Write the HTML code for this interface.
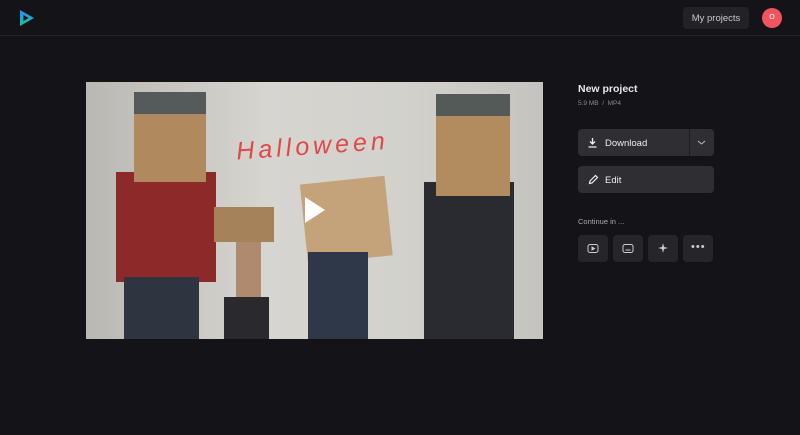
<!DOCTYPE html>
<html><head><style>
*{margin:0;padding:0;box-sizing:border-box}
body{width:800px;height:435px;background:#141418;font-family:"Liberation Sans",sans-serif;position:relative;overflow:hidden;color:#e8e8ea}
.hdr{position:absolute;left:0;top:0;width:800px;height:36px;border-bottom:1px solid #222227}
.mp{position:absolute;left:683px;top:7px;width:66px;height:22px;background:#232327;border-radius:4px;font-size:9.5px;color:#c8c8cc;text-align:center;line-height:23px}
.av{position:absolute;left:762px;top:8px;width:20px;height:20px;border-radius:50%;background:#f0555e;color:#fff;font-size:7px;text-align:center;line-height:20px}
.img{position:absolute;left:86px;top:82px;width:457px;height:257px;overflow:hidden;background:linear-gradient(90deg,#b9b8b3,#d6d5d0 40%,#d2d1cc 70%,#c4c3be)}
.btn{position:absolute;left:578px;background:#2e2e33;border-radius:4px;font-size:9.5px;color:#eee}
.sq{position:absolute;top:235px;width:30px;height:27px;background:#26262a;border-radius:4px}
</style></head><body>
<div class="hdr">
<svg style="position:absolute;left:18px;top:9px" width="18" height="18" viewBox="0 0 18 18"><defs><linearGradient id="g" x1="0" y1="0" x2="0" y2="1"><stop offset="0" stop-color="#2b8cf0"/><stop offset="1" stop-color="#16c5a0"/></linearGradient></defs><path d="M2 1 L16 9 L2 17 Z M5.5 6 L5.5 12 L10.5 9 Z" fill="url(#g)" fill-rule="evenodd"/></svg>
<div class="mp">My projects</div><div class="av">O</div>
</div>
<div class="img">
<svg width="457" height="257" viewBox="0 0 457 257">
<rect x="30" y="90" width="100" height="110" fill="#8c2a2a"/>
<rect x="38" y="195" width="75" height="62" fill="#2e3440"/>
<rect x="48" y="10" width="72" height="90" fill="#b08a5e"/>
<rect x="48" y="10" width="72" height="22" fill="#555a5a"/>
<rect x="128" y="125" width="60" height="35" fill="#a5825a"/>
<rect x="138" y="215" width="45" height="42" fill="#2a2a2e"/>
<rect x="150" y="160" width="25" height="55" fill="#b08a6e"/>
<rect x="218" y="98" width="85" height="80" fill="#c4a37a" transform="rotate(-6 260 140)"/>
<rect x="222" y="170" width="60" height="87" fill="#2e3848"/>
<rect x="338" y="100" width="90" height="157" fill="#2a2b30"/>
<rect x="350" y="12" width="74" height="102" fill="#b28b5e"/>
<rect x="350" y="12" width="74" height="22" fill="#545a58"/>
<text x="150" y="72" font-family="Liberation Sans,sans-serif" font-style="italic" font-size="25" fill="#e04848" letter-spacing="4" transform="rotate(-4 230 62)">Halloween</text>
<path d="M219 115 L239 128 L219 141 Z" fill="#fff"/>
</svg>
</div>
<div style="position:absolute;left:578px;top:83px;font-size:10.5px;font-weight:bold">New project</div>
<div style="position:absolute;left:578px;top:100px;font-size:6.5px;color:#8a8a90">5.9 MB &nbsp;/&nbsp; MP4</div>
<div class="btn" style="top:129px;width:136px;height:27px">
<svg style="position:absolute;left:9px;top:8px" width="11" height="11" viewBox="0 0 11 11" fill="none" stroke="#eee" stroke-width="1.3"><path d="M5.5 1V7M3 4.5L5.5 7 8 4.5M1.5 10H9.5"/></svg>
<span style="position:absolute;left:27px;top:9px">Download</span>
<div style="position:absolute;left:111px;top:0;width:1px;height:27px;background:#1e1e22"></div>
<svg style="position:absolute;left:119px;top:10px" width="9" height="7" viewBox="0 0 9 7" fill="none" stroke="#bbb" stroke-width="1"><path d="M1 2L4.5 5 8 2"/></svg>
</div>
<div class="btn" style="top:166px;width:136px;height:27px">
<svg style="position:absolute;left:10px;top:8px" width="11" height="11" viewBox="0 0 11 11" fill="none" stroke="#eee" stroke-width="1.2"><path d="M1.5 9.5L2 7 7.5 1.5 9.5 3.5 4 9Z"/></svg>
<span style="position:absolute;left:27px;top:9px">Edit</span>
</div>
<div style="position:absolute;left:578px;top:217px;font-size:7.5px;color:#aaa">Continue in ...</div>
<div class="sq" style="left:578px"><svg style="position:absolute;left:9px;top:8px" width="12" height="11" viewBox="0 0 12 11" fill="none" stroke="#ccc"><rect x="1" y="1.5" width="10" height="8" rx="2"/><path d="M5 4L7.5 5.5 5 7Z" fill="#ccc"/></svg></div>
<div class="sq" style="left:613px"><svg style="position:absolute;left:9px;top:8px" width="12" height="11" viewBox="0 0 12 11" fill="none" stroke="#ccc"><rect x="1" y="1.5" width="10" height="8" rx="2"/><path d="M3.5 7H8.5"/></svg></div>
<div class="sq" style="left:648px"><svg style="position:absolute;left:9px;top:7px" width="12" height="12" viewBox="0 0 12 12" fill="#ccc"><path d="M6 1L7 5 11 6 7 7 6 11 5 7 1 6 5 5Z"/></svg></div>
<div class="sq" style="left:683px"><span style="position:absolute;left:8px;top:6px;font-size:11px;color:#ccc;letter-spacing:1px">•••</span></div>
</body></html>
